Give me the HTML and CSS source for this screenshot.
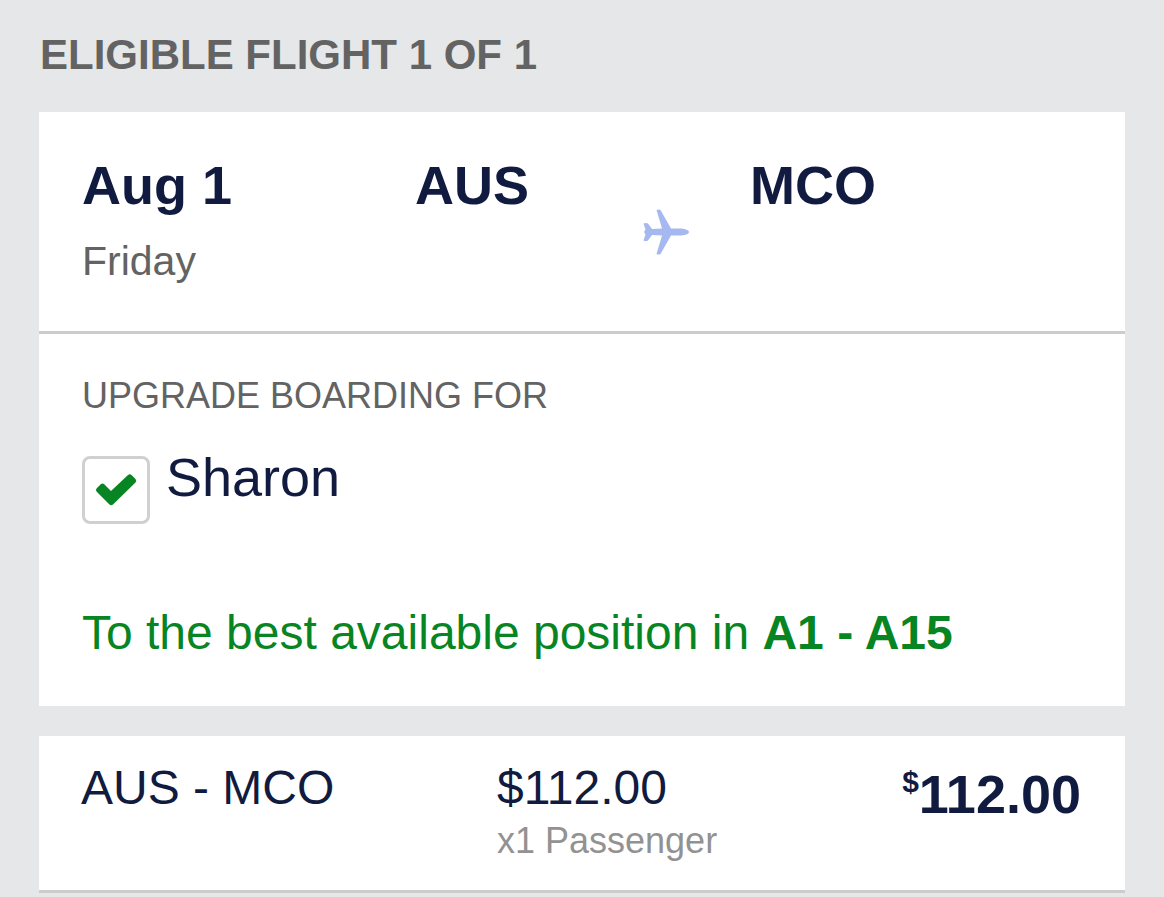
FILE: index.html
```html
<!DOCTYPE html>
<html lang="en">
<head>
<meta charset="utf-8">
<meta name="viewport" content="width=device-width, initial-scale=1">
<title>Upgraded Boarding</title>
<link rel="stylesheet" href="styles.css">
</head>
<body>
<main class="page">
  <h1 class="heading">ELIGIBLE FLIGHT 1 OF 1</h1>
  <section class="card">
    <div class="flight">
      <div>
        <h2 class="flight-title">Aug 1</h2>
        <p class="weekday">Friday</p>
      </div>
      <h2 class="flight-title">AUS</h2>
      <svg class="plane" viewBox="0 0 46 46" aria-hidden="true"><path d="M13.5 1Q15.500 0 17.500 1L28 19.500H38Q46 20.500 46 23T38 26.500H28L17.500 45Q15.500 46 13.500 45L19 26.500L9 26L5 31.500Q3 32.500.5 31.500L2.500 25.500L1 23L2.500 20.500L.5 14.500Q3 13.500 5 14.500L9 20L19 19.500Z"/></svg>
      <h2 class="flight-title">MCO</h2>
    </div>
    <div class="upgrade">
      <h3 class="label">UPGRADE BOARDING FOR</h3>
      <label class="passenger">
        <input class="check" type="checkbox" checked>
        <svg class="tick" viewBox="0 0 42 34" aria-hidden="true"><path d="M2 15L6 11Q7.500 10 9 11L16 18L33 2Q35 .5 36.500 2L40.500 6Q42 8 40.500 9.500L18 31.500Q16 33 14.500 31.500L2 19Q0 17 2 15Z"/></svg>
        <span class="name">Sharon</span>
      </label>
      <p class="position">To the best available position in <strong>A1 - A15</strong></p>
    </div>
  </section>
  <section class="card price">
    <p class="route">AUS - MCO</p>
    <div>
      <p class="fare">$112.00</p>
      <p class="count">x1 Passenger</p>
    </div>
    <p class="total"><span class="currency">$</span>112.00</p>
  </section>
</main>
</body>
</html>
```
FILE: styles.css
```css
* { box-sizing: border-box; }
body {
  margin: 0;
  background: #e6e7e8;
  color: #111b40;
  font-family: "Liberation Sans", Arial, sans-serif;
}
h1, h2, h3, p { margin: 0; }
.page { padding: 32px 39px 0; }
.heading {
  margin-bottom: 34px;
  padding-left: 1px;
  color: #636363;
  font-size: 42px;
  line-height: 46px;
}
.card { background: #fff; }
.flight {
  display: grid;
  grid-template-columns: 333px 228px 107px 1fr;
  align-items: start;
  padding: 42px 43px 45px;
  border-bottom: 3px solid #ccc;
}
.flight-title { font-size: 54px; line-height: 62px; }
.weekday {
  margin-top: 20px;
  color: #636363;
  font-size: 41px;
  line-height: 50px;
}
.plane { width: 46px; height: 46px; margin-top: 55px; fill: #a5b9f0; }
.upgrade { padding: 40px 43px 44px; }
.label {
  color: #636363;
  font-size: 36px;
  font-weight: 400;
  line-height: 44px;
}
.passenger { display: grid; grid-template-columns: 68px 1fr; column-gap: 16px; margin-top: 38px; }
.check {
  grid-area: 1 / 1;
  appearance: none;
  width: 68px;
  height: 68px;
  margin: 0;
  border: 3px solid #d0d0d0;
  border-radius: 8px;
  background: #fff;
}
.tick { grid-area: 1 / 1; place-self: center; width: 42px; height: 34px; fill: #078523; visibility: hidden; pointer-events: none; }
.check:checked + .tick { visibility: visible; }
.name { font-size: 54px; line-height: 42px; }
.position {
  margin-top: 80px;
  color: #078523;
  font-size: 48px;
  line-height: 58px;
}
.price {
  display: grid;
  grid-template-columns: 416px 1fr auto;
  align-items: start;
  margin-top: 30px;
  padding: 25px 44px 23px 42px;
  border-bottom: 3px solid #ccc;
}
.route, .fare { font-size: 48px; line-height: 54px; }
.count { color: #929292; font-size: 36px; line-height: 52px; }
.total { font-size: 54px; font-weight: 700; line-height: 66px; }
.currency { font-size: 30px; line-height: 30px; vertical-align: 21px; }
```
